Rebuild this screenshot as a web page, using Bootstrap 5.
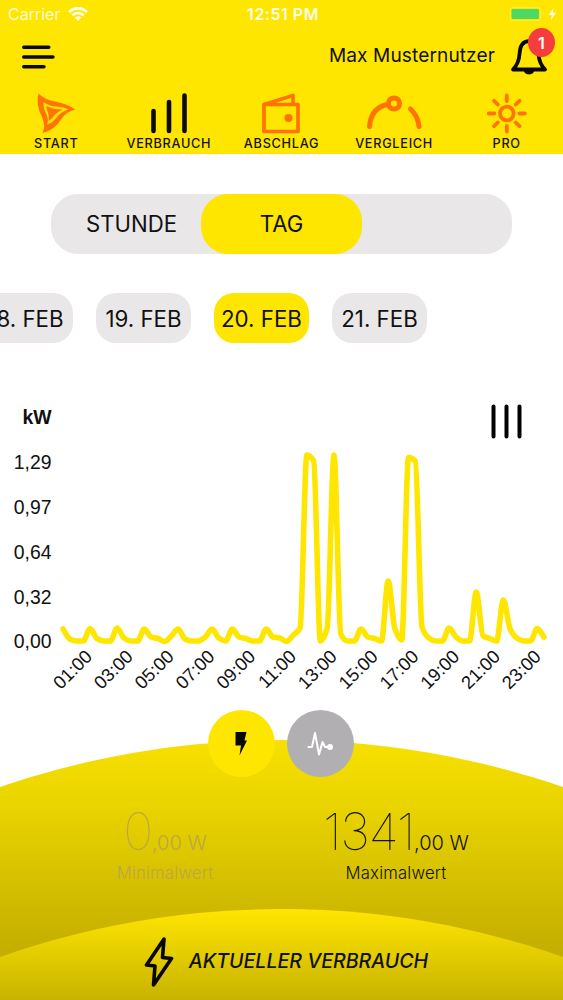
<!DOCTYPE html>
<html lang="de">
<head>
<meta charset="utf-8">
<meta name="viewport" content="width=device-width, initial-scale=1">
<title>Verbrauch</title>
<link href="https://cdn.jsdelivr.net/npm/bootstrap@5.3.0/dist/css/bootstrap.min.css" rel="stylesheet">
<style>
:root{--sun:#ffe600;--ash:#e9e7e8;--flame:#ff7300}
body{font-family:Inter,"Liberation Sans",sans-serif;color:#111;background:#fff;line-height:1}
.app{height:1000px;overflow:hidden}
svg{display:block;flex:none}
.top{background:var(--sun);height:154px}
.status{height:28px;padding:0 6px 0 8px;color:#fffbd0;font-size:16px}
.status>*{flex:1 1 0}
.status .clock{font-weight:600;letter-spacing:.5px;color:#fffde6;padding-left:1px}
.userbar{height:61px;padding:0 16px 3px 22px}
.username{font-size:19.1px;letter-spacing:.1px;padding-bottom:2px}
.bell{width:36px;height:40px;margin-left:16px}
.count{right:-8px;top:-9px;width:27px;height:29px;background:#f53d3d;color:#fff;font-size:16px;font-weight:600}
.tabs .tab{height:65px;font-size:12.7px;font-weight:500;letter-spacing:.72px;color:#141300}
.tab svg{margin-bottom:4px}
.segment{margin:40px 51px 0;height:60px;border-radius:27px;background:var(--ash);font-size:22.2px}
.segment>div{flex:0 0 161px;border-radius:27px}
.segment>div:first-child{flex-basis:150px;padding-left:11px}
.on{background:var(--sun)}
.off{background:var(--ash)}
.chips{margin:39px 0 0 -22px;gap:23px;height:50px;font-size:22.3px}
.chips>div{flex:0 0 95px;border-radius:20px;padding-top:2px}
.plot text{font-family:"Liberation Sans",sans-serif;font-size:19.4px;fill:#111}
.plot #hours text{font-size:18.4px}
.panel{height:292px;padding-top:2px}
.panel>.hills{top:0;left:0}
.round-btn{width:67px;height:67px}
.pair{gap:12px;padding-right:2px}
.values{margin-top:33px}
.reading{width:200px}
.reading .num{font-size:51px;font-weight:100;letter-spacing:-1.5px;line-height:44px}
.reading .frac{font-size:20px;font-weight:300}
.reading .cap{font-size:16.7px;font-weight:300;margin-top:11px;letter-spacing:.2px}
.dim{color:#bda548}
.now{margin:54px 0 0 9px;font-size:19.6px;font-style:italic;font-weight:500}
</style>
</head>
<body>
<main class="app">
<header class="top">
  <div class="status d-flex align-items-center">
    <div class="d-flex align-items-center gap-2"><span>Carrier</span>
      <svg width="20" height="14" viewBox="0 0 20 14"><g fill="none" stroke="#fffde6" stroke-width="2.8"><path d="M1 5Q10-2.6 19 5"/><path d="M4.2 8.4Q10 3.4 15.8 8.4"/></g><path d="M6.7 10.6Q10 7.8 13.3 10.6L10 14z" fill="#fffde6"/></svg>
    </div>
    <div class="clock text-center">12:51 PM</div>
    <div class="d-flex justify-content-end align-items-center">
      <svg width="47" height="14" viewBox="0 0 47 14"><rect x=".5" y=".5" width="30" height="13" rx="2.5" fill="none" stroke="#fbec40"/><rect x="1.500" y="2" width="27.500" height="10" rx="1" fill="#4cd964"/><path d="M32.5 5q2 2 0 4z" fill="#fbec40"/><path d="M43.5 1l-4.8 7h3l-.8 5 5.2-7.2h-3.2z" fill="#fffde6"/></svg>
    </div>
  </div>
  <div class="userbar d-flex align-items-center">
    <svg width="33" height="24" viewBox="0 0 33 24" stroke="#090900" stroke-width="3.4" stroke-linecap="round"><path d="M1.700 2.200H26.800M1.700 12H31M1.700 21.800H22"/></svg>
    <span class="username ms-auto">Max Musternutzer</span>
    <div class="bell position-relative">
      <svg width="36" height="40" viewBox="0 0 36 40"><path d="M2 32.500C6 28.500 8 25 8.500 17C9 8 13 4.200 18 4.200S27 8 27.500 17C28 25 30 28.500 34 32.500Z" fill="none" stroke="#080800" stroke-width="3.800" stroke-linejoin="round"/><path d="M13 33.500h10c0 5.200-10 5.200-10 0z" fill="#080800"/></svg>
      <span class="count position-absolute rounded-circle d-flex align-items-center justify-content-center">1</span>
    </div>
  </div>
  <nav class="tabs row g-0">
    <div class="tab col d-flex flex-column align-items-center"><svg width="112" height="45" viewBox="0 89 112 45"><path d="M38.500 93.500Q45 100 55 101.500Q66 103.500 75.500 109.500Q67 111 61 119.500Q55 130 42.500 133Q46 126 42 117Q35.500 104 38.500 93.500z" fill="#ff7300"/><path d="M43.500 102Q50 106.500 57 106.500Q64 107 68.500 109.500Q61 111.500 57 117Q53 122.500 47 124.500Q49 120 46.500 114.500Q43 108 43.500 102z" fill="#ffe600"/><path d="M46.500 106Q53 109.500 63 109.500Q57 112 54 116Q51.500 119.500 48.500 121Q49.500 116 48 112.500Q46 109 46.500 106z" fill="#ff7300"/></svg>START</div>
    <div class="tab col d-flex flex-column align-items-center"><svg width="112" height="45" viewBox="0 0 112 45" stroke="#0b0b00" stroke-width="4.600" stroke-linecap="round"><path d="M40.500 22V42M56 13V42M71.500 6.500V42"/></svg>VERBRAUCH</div>
    <div class="tab col d-flex flex-column align-items-center"><svg width="112" height="45" viewBox="0 0 112 45"><g fill="none" stroke="#ff7300" stroke-width="3.700" stroke-linejoin="round"><path d="M39 15.500H73V42.500H39ZM39 15.500L68 6.500V15.500"/></g><circle cx="63.500" cy="29" r="4" fill="#ff7300"/></svg>ABSCHLAG</div>
    <div class="tab col d-flex flex-column align-items-center"><svg width="112" height="45" viewBox="0 0 112 45"><g fill="none" stroke="#ff7300" stroke-width="5" stroke-linecap="round"><path d="M31.500 37.500Q33 19 49 15.500M72.500 20Q80 27 81 37.500"/><circle cx="56" cy="14.500" r="5.600"/></g></svg>VERGLEICH</div>
    <div class="tab col d-flex flex-column align-items-center"><svg width="112" height="45" viewBox="0 0 112 45"><g fill="none" stroke="#ff7300" stroke-width="3.800" stroke-linecap="round" transform="translate(55.800 24.500)"><circle r="6.800"/><path d="M0-12.500V-18M0 12.500V18M-12.500 0H-18M12.500 0H18M-9-9L-12.700-12.700M9-9L12.700-12.700M-9 9L-12.700 12.700M9 9L12.700 12.700"/></g></svg>PRO</div>
  </nav>
</header>

<div class="segment d-flex">
  <div class="d-flex align-items-center justify-content-center">STUNDE</div>
  <div class="on d-flex align-items-center justify-content-center">TAG</div>
</div>
<div class="chips d-flex">
  <div class="off d-flex align-items-center justify-content-center">18. FEB</div>
  <div class="off d-flex align-items-center justify-content-center">19. FEB</div>
  <div class="on d-flex align-items-center justify-content-center">20. FEB</div>
  <div class="off d-flex align-items-center justify-content-center">21. FEB</div>
</div>

<svg class="plot" width="563" height="365" viewBox="0 343 563 365">
  <g text-anchor="end"><text x="51.500" y="423.500" font-weight="700">kW</text>
  <text x="51.500" y="469.300">1,29</text><text x="51.500" y="514">0,97</text><text x="51.500" y="558.800">0,64</text><text x="51.500" y="603.500">0,32</text><text x="51.500" y="648.300">0,00</text></g>
  <path d="M493.500 406.500V436.500M506.500 406.500V436.500M519.500 406.500V436.500" stroke="#000" stroke-width="4" stroke-linecap="round"/>
  <path id="curve" fill="none" stroke="#ffe600" stroke-width="5.600" stroke-linecap="round" stroke-linejoin="round"/>
  <g id="hours" text-anchor="end"></g>
</svg>

<section class="panel position-relative">
  <svg class="hills position-absolute" width="563" height="292" viewBox="0 708 563 292">
    <defs>
      <linearGradient id="back" gradientUnits="userSpaceOnUse" x1="0" y1="740" x2="0" y2="960"><stop stop-color="#f8e000"/><stop offset=".25" stop-color="#ecd600"/><stop offset="1" stop-color="#c2ac00"/></linearGradient>
      <linearGradient id="front" gradientUnits="userSpaceOnUse" x1="0" y1="909" x2="0" y2="1000"><stop stop-color="#ffe600"/><stop offset="1" stop-color="#c8b300"/></linearGradient>
    </defs>
    <circle cx="281.500" cy="1606" r="866" fill="url(#back)"/>
    <circle cx="281.500" cy="1758.500" r="849.500" fill="url(#front)"/>
  </svg>
  <div class="position-relative">
    <div class="pair d-flex justify-content-center">
      <div class="round-btn rounded-circle on d-flex align-items-center justify-content-center"><svg width="12" height="24" viewBox="0 0 12 24"><path d="M.5 0H11.500L9.500 8.500H12L4.500 23.500L6 13.500H.5z" fill="#090900"/></svg></div>
      <div class="round-btn rounded-circle d-flex align-items-center justify-content-center" style="background:#b2afb2"><svg width="27" height="26" viewBox="0 0 27 26"><path d="M1.500 16H5L8 2L12 23.500L15.500 11L18 16H22" fill="none" stroke="#fff" stroke-width="2" stroke-linecap="round" stroke-linejoin="round"/><circle cx="23" cy="16" r="3" fill="#fff"/></svg></div>
    </div>
    <div class="values d-flex">
      <div class="reading dim text-center" style="margin-left:65px"><div><span class="num">0</span><span class="frac">,00 W</span></div><div class="cap">Minimalwert</div></div>
      <div class="reading text-center" style="margin-left:31px"><div><span class="num">1341</span><span class="frac">,00 W</span></div><div class="cap">Maximalwert</div></div>
    </div>
    <div class="now d-flex justify-content-center align-items-center" style="gap:15px"><svg width="30" height="52" viewBox="0 0 30 52"><path d="M20 3L2.500 29L11 30L9.500 49L27.500 22.500L18.500 21.500Z" fill="none" stroke="#080800" stroke-width="3.600" stroke-linejoin="round"/></svg><span>AKTUELLER VERBRAUCH</span></div>
  </div>
</section>
</main>
<script src="https://cdn.jsdelivr.net/npm/bootstrap@5.3.0/dist/js/bootstrap.bundle.min.js"></script>
<script>
// one sample every 20 minutes, joined by a monotone cubic curve
const ys=[629,639,641,641,628.5,638.5,641,641,628,638,641,641,629,637,638.5,641.5,636,629,639,641,641,637,629,638,641,629,637,638.5,641,641,629,637,638,641.5,635,628,455,461,641,628,455,634,641,641,629,637,638.5,641,581,629,640,457.5,461,627,638,641,641,628,637,641,641,592,636,638.5,641,600,629,638,641,641,628.5,637];
const n=ys.length,h=(544-63)/(n-1),d=[],m=[];
for(let i=0;i<n-1;i++)d.push((ys[i+1]-ys[i])/h);
m[0]=d[0];m[n-1]=d[n-2];
for(let i=1;i<n-1;i++)m[i]=d[i-1]*d[i]<=0?0:2*d[i-1]*d[i]/(d[i-1]+d[i]);
let p='M63 '+ys[0];
for(let i=0;i<n-1;i++){const x=63+i*h;p+=`C${x+h/3} ${ys[i]+m[i]*h/3} ${x+2*h/3} ${ys[i+1]-m[i+1]*h/3} ${x+h} ${ys[i+1]}`}
document.getElementById('curve').setAttribute('d',p);
let t='';
for(let i=0;i<12;i++)t+=`<text transform="translate(${93.3+i*40.8} 657.7) rotate(-45)">${String(2*i+1).padStart(2,'0')}:00</text>`;
document.getElementById('hours').innerHTML=t;
</script>
</body>
</html>
